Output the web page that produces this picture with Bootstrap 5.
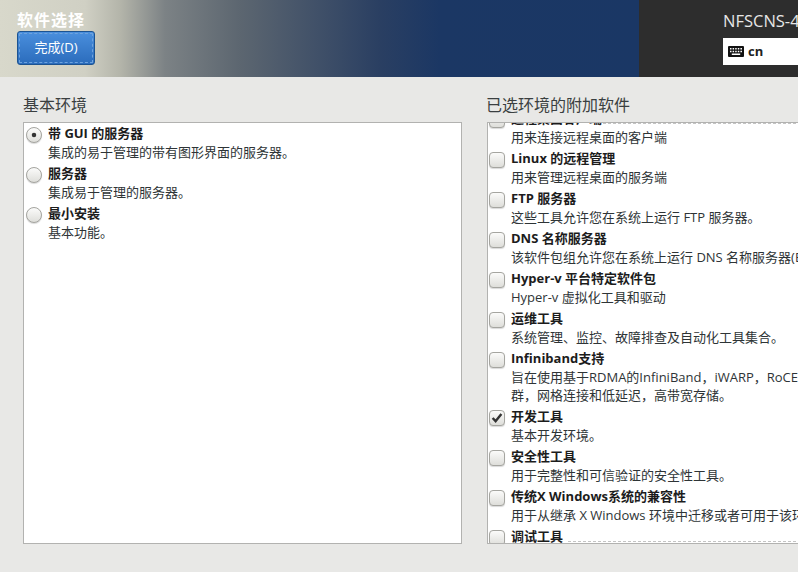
<!DOCTYPE html>
<html lang="zh-CN">

<head>
    <meta charset="UTF-8" />
    <meta name="viewport" content="width=device-width, initial-scale=1" />
    <title>软件选择</title>
    <link href="https://cdn.jsdelivr.net/npm/bootstrap@5.3.0/dist/css/bootstrap.min.css" rel="stylesheet">

    <style>
        html, body {
            height: 100%;
            overflow: hidden;
        }

        body {
            background-color: #e8e8e6;
            font-family: "Open Sans", "Noto Sans CJK SC", sans-serif;
            font-size: 13px;
            color: #2e3436;
        }

        .top-bar {
            height: 77px;
        }

        .brand-area {
            width: 639px;
            padding: 11px 0 0 17px;
            background: linear-gradient(90deg, #d8d8cb 0, #d0d0c4 85px, #b4b5aa 120px, #7c8285 165px, #5c6670 240px, #2a3f62 380px, #1b3764 440px, #1a3765 100%);
        }

        .screen-title {
            font-size: 16px;
            font-weight: 700;
            letter-spacing: 1px;
            line-height: 19px;
            color: #fff;
            margin: 0 0 1px;
        }

        .done-btn {
            width: 78px;
            height: 34px;
            padding: 0;
            font-size: 13px;
            color: #fff;
            border: 1px solid #1c5391;
            border-radius: 3px;
            background: linear-gradient(#4a8fdd, #2b6cbc);
            outline: 1px dashed #6ea3de;
            outline-offset: -3px;
        }

        .install-area {
            flex: 1;
            min-width: 0;
            padding: 12px 0 0 84px;
            background-color: #2d2d2d;
            color: #e6e6e6;
            white-space: nowrap;
            overflow: hidden;
        }

        .product-name {
            font-size: 16.5px;
            line-height: 18px;
            margin-bottom: 8px;
        }

        .kbd-box {
            height: 27px;
            padding-left: 5px;
            background-color: #fff;
            color: #222;
            font-weight: 700;
        }

        .work-area {
            padding: 18px 0 0 23px;
            gap: 25px;
        }

        .left-col {
            width: 439px;
            flex: none;
        }

        .right-col {
            flex: 1;
            min-width: 0;
        }

        .col-title {
            font-size: 16px;
            line-height: 21px;
            margin: 0 0 6px;
            color: #3a3f40;
            font-weight: 400;
        }

        .pick-panel {
            height: 422px;
            background-color: #fff;
            border: 1px solid #b2b2b0;
            overflow: hidden;
        }

        .right-col .col-title {
            margin-left: -1px;
        }

        .right-col .pick-panel {
            width: 340px;
            position: relative;
        }

        /* scroll hints, top and bottom of the list */
        .right-col .pick-panel::before,
        .right-col .pick-panel::after {
            content: "";
            position: absolute;
            right: 0;
            border-top: 1px dashed #c4c4c4;
        }

        .right-col .pick-panel::before {
            top: 0;
            left: 115px;
        }

        .right-col .pick-panel::after {
            bottom: 1px;
            left: 80px;
        }

        .left-list {
            padding: 0 0 0 2px;
        }

        .right-list {
            margin-top: -15px;
            padding-left: 1px;
            white-space: nowrap;
        }

        .pick-row {
            gap: 6px;
            min-height: 40px;
        }

        .pick-row .form-check-input {
            flex: none;
            width: 16px;
            height: 16px;
            margin: 4px 0 0;
            border: 1px solid #a5a5a0;
            background-color: #f0f0ed;
            background-image: linear-gradient(#fbfbfa, #dededa);
            box-shadow: 0 1px 1px rgba(0, 0, 0, .15);
        }

        .pick-row .form-check-input[type=checkbox] {
            border-radius: 4px;
        }

        .pick-row .form-check-input[type=radio]:checked {
            background-image: url("data:image/svg+xml,%3Csvg xmlns='http://www.w3.org/2000/svg' viewBox='0 0 16 16'%3E%3Ccircle cx='8' cy='8' r='2.6' fill='%23333'/%3E%3C/svg%3E"), linear-gradient(#fbfbfa, #dededa);
        }

        .pick-row .form-check-input[type=checkbox]:checked {
            background-image: url("data:image/svg+xml,%3Csvg xmlns='http://www.w3.org/2000/svg' viewBox='0 0 16 16'%3E%3Cpath d='M3 8 6.4 11.6 13 3.4' fill='none' stroke='%23333' stroke-width='2.8'/%3E%3C/svg%3E"), linear-gradient(#fbfbfa, #dededa);
        }

        .pick-name {
            font-weight: 700;
            line-height: 21px;
            color: #1c1c1c;
        }

        .pick-desc {
            line-height: 18px;
            margin-top: -1px;
            color: #2e3436;
        }

        .tall-row {
            min-height: 58px;
        }
    </style>
</head>

<body>

    <header class="top-bar d-flex">
        <div class="brand-area">
            <h1 class="screen-title">软件选择</h1>
            <button type="button" class="btn done-btn">完成(D)</button>
        </div>
        <div class="install-area">
            <div class="product-name">NFSCNS-4.0 安装</div>
            <div class="kbd-box d-flex align-items-center gap-1">
                <svg width="16" height="11" viewBox="0 0 16 11" aria-hidden="true">
                    <rect width="16" height="11" rx="1" fill="#111" />
                    <path d="M2 2h1.5v1.5H2zM4.6 2h1.5v1.5H4.6zM7.2 2h1.5v1.5H7.2zM9.8 2h1.5v1.5H9.8zM12.4 2h1.6v1.5h-1.6zM2 4.8h1.5v1.5H2zM4.6 4.8h1.5v1.5H4.6zM7.2 4.8h1.5v1.5H7.2zM9.8 4.8h1.5v1.5H9.8zM12.4 4.8h1.6v1.5h-1.6zM3.8 7.6h8.4v1.5H3.8z" fill="#fff" />
                </svg>
                <span>cn</span>
            </div>
        </div>
    </header>

    <main class="work-area d-flex">
        <section class="left-col">
            <h2 class="col-title">基本环境</h2>
            <div class="pick-panel">
                <div class="left-list">
                    <label class="pick-row d-flex">
                        <input class="form-check-input" type="radio" name="env" checked>
                        <span><span class="pick-name d-block">带 GUI 的服务器</span><span class="pick-desc d-block">集成的易于管理的带有图形界面的服务器。</span></span>
                    </label>
                    <label class="pick-row d-flex">
                        <input class="form-check-input" type="radio" name="env">
                        <span><span class="pick-name d-block">服务器</span><span class="pick-desc d-block">集成易于管理的服务器。</span></span>
                    </label>
                    <label class="pick-row d-flex">
                        <input class="form-check-input" type="radio" name="env">
                        <span><span class="pick-name d-block">最小安装</span><span class="pick-desc d-block">基本功能。</span></span>
                    </label>
                </div>
            </div>
        </section>

        <section class="right-col">
            <h2 class="col-title">已选环境的附加软件</h2>
            <div class="pick-panel">
                <div class="right-list">
                    <label class="pick-row d-flex">
                        <input class="form-check-input" type="checkbox">
                        <span><span class="pick-name d-block">远程桌面客户端</span><span class="pick-desc d-block">用来连接远程桌面的客户端</span></span>
                    </label>
                    <label class="pick-row d-flex">
                        <input class="form-check-input" type="checkbox">
                        <span><span class="pick-name d-block">Linux 的远程管理</span><span class="pick-desc d-block">用来管理远程桌面的服务端</span></span>
                    </label>
                    <label class="pick-row d-flex">
                        <input class="form-check-input" type="checkbox">
                        <span><span class="pick-name d-block">FTP 服务器</span><span class="pick-desc d-block">这些工具允许您在系统上运行 FTP 服务器。</span></span>
                    </label>
                    <label class="pick-row d-flex">
                        <input class="form-check-input" type="checkbox">
                        <span><span class="pick-name d-block">DNS 名称服务器</span><span class="pick-desc d-block">该软件包组允许您在系统上运行 DNS 名称服务器(BIND)。</span></span>
                    </label>
                    <label class="pick-row d-flex">
                        <input class="form-check-input" type="checkbox">
                        <span><span class="pick-name d-block">Hyper-v 平台特定软件包</span><span class="pick-desc d-block">Hyper-v 虚拟化工具和驱动</span></span>
                    </label>
                    <label class="pick-row d-flex">
                        <input class="form-check-input" type="checkbox">
                        <span><span class="pick-name d-block">运维工具</span><span class="pick-desc d-block">系统管理、监控、故障排查及自动化工具集合。</span></span>
                    </label>
                    <label class="pick-row tall-row d-flex">
                        <input class="form-check-input" type="checkbox">
                        <span><span class="pick-name d-block">Infiniband支持</span><span class="pick-desc d-block">旨在使用基于RDMA的InfiniBand，iWARP，RoCE和OPA结构的集<br>群，网格连接和低延迟，高带宽存储。</span></span>
                    </label>
                    <label class="pick-row d-flex">
                        <input class="form-check-input" type="checkbox" checked>
                        <span><span class="pick-name d-block">开发工具</span><span class="pick-desc d-block">基本开发环境。</span></span>
                    </label>
                    <label class="pick-row d-flex">
                        <input class="form-check-input" type="checkbox">
                        <span><span class="pick-name d-block">安全性工具</span><span class="pick-desc d-block">用于完整性和可信验证的安全性工具。</span></span>
                    </label>
                    <label class="pick-row d-flex">
                        <input class="form-check-input" type="checkbox">
                        <span><span class="pick-name d-block">传统X Windows系统的兼容性</span><span class="pick-desc d-block">用于从继承 X Windows 环境中迁移或者可用于该环境的工具。</span></span>
                    </label>
                    <label class="pick-row d-flex">
                        <input class="form-check-input" type="checkbox">
                        <span><span class="pick-name d-block">调试工具</span><span class="pick-desc d-block">用于调试程序的工具。</span></span>
                    </label>
                </div>
            </div>
        </section>
    </main>

    <script src="https://cdn.jsdelivr.net/npm/bootstrap@5.3.0/dist/js/bootstrap.bundle.min.js"></script>
</body>

</html>
